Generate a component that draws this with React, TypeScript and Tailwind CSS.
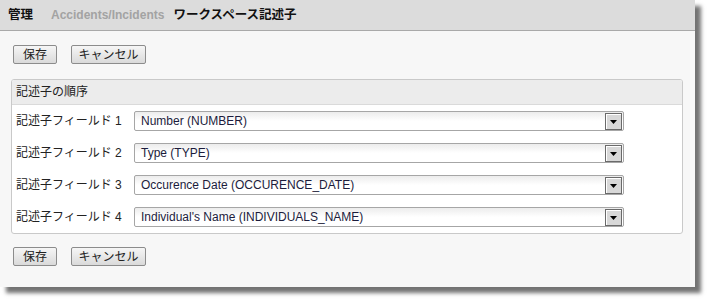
import React from 'react';

const fields = [
  'Number (NUMBER)',
  'Type (TYPE)',
  'Occurence Date (OCCURENCE_DATE)',
  "Individual's Name (INDIVIDUALS_NAME)",
];

const font = 'font-["Liberation_Sans","Noto_Sans_CJK_JP",sans-serif]';

function Btn({ children, w }: { children: React.ReactNode; w: string }) {
  return (
    <button
      className={`${w} h-[19px] flex items-center justify-center border border-[#8c8c8c] rounded-[2px] bg-gradient-to-b from-[#f6f6f6] to-[#dadada] text-[12px] text-[#222] leading-none`}
    >
      {children}
    </button>
  );
}

function ButtonRow() {
  return (
    <div className="flex gap-[14px] pl-[13px]">
      <Btn w="w-[44px]">保存</Btn>
      <Btn w="w-[75px]">キャンセル</Btn>
    </div>
  );
}

function Select({ value }: { value: string }) {
  return (
    <div className="relative w-[490px] h-[20px] border border-[#a6a6a6] rounded-[2px] bg-gradient-to-b from-[#ececec] via-white to-white flex items-center">
      <span className="pl-[6px] text-[12px] text-[#1c1c3c] leading-none">{value}</span>
      <div className="absolute right-[1px] top-[1px] w-[17px] h-[17px] border border-[#6a6a6a] bg-[#d8d8d8] shadow-[inset_1px_1px_0_#ffffff] flex items-center justify-center">
        <svg width="7" height="4" viewBox="0 0 7 4">
          <path d="M0 0h7L3.5 4z" fill="#000" />
        </svg>
      </div>
    </div>
  );
}

export default function App() {
  return (
    <div className={`w-[712px] h-[302px] bg-white ${font}`}>
      <div className="w-[695px] h-[287px] bg-[#f7f7f7] shadow-[6px_6px_4px_rgba(0,0,0,0.55)]">
        {/* Breadcrumb header */}
        <div className="h-[31px] bg-[#dcdcdc] border-b border-[#a9a9a9] flex items-center pl-[8px] text-[12.5px] font-bold leading-none">
          <span className="text-[#111]">管理</span>
          <span className="ml-[18px] text-[12px] text-[#a3a3a3]">Accidents/Incidents</span>
          <span className="ml-[9px] text-[#111]">ワークスペース記述子</span>
        </div>

        <div className="pt-[14px]">
          <ButtonRow />
        </div>

        {/* Descriptor order panel */}
        <div className="ml-[11px] mt-[15px] w-[672px] border border-[#c9c9c9] rounded-[3px] bg-white overflow-hidden">
          <div className="h-[25px] bg-[#ececec] border-b border-[#dadada] flex items-center pl-[4px] text-[12px] text-[#222]">
            記述子の順序
          </div>
          <div className="flex flex-col gap-[12px] pt-[6px] pb-[6px] px-[4px]">
            {fields.map((f, i) => (
              <div key={f} className="flex items-center">
                <div className="w-[118px] text-[12px] text-[#222] leading-none -mt-[1px]">記述子フィールド {i + 1}</div>
                <Select value={f} />
              </div>
            ))}
          </div>
        </div>

        <div className="pt-[13px]">
          <ButtonRow />
        </div>
      </div>
    </div>
  );
}
